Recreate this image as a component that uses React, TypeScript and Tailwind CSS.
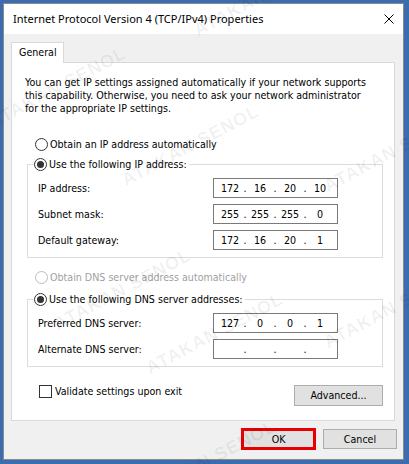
import React, { Fragment } from "react";

const bodyFont = {
  fontFamily: '"DejaVu Sans Condensed", "Liberation Sans", sans-serif',
  fontSize: "10.6px",
  lineHeight: "13px",
};

function Radio({ checked, disabled }: { checked?: boolean; disabled?: boolean }) {
  return (
    <span
      className={`flex h-[13px] w-[13px] shrink-0 items-center justify-center rounded-full border bg-white ${
        disabled ? "border-[#bcbcbc]" : "border-[#333333]"
      }`}
    >
      {checked && <span className="h-[7px] w-[7px] rounded-full bg-[#333333]" />}
    </span>
  );
}

function IpField({ parts }: { parts: string[] }) {
  return (
    <div className="flex h-[20px] w-[125px] items-center border border-[#7a7a7a] bg-white pl-[4px] text-black">
      {parts.map((p, i) => (
        <Fragment key={i}>
          {i > 0 && <span className="w-[6px] text-center">.</span>}
          <span className="w-[24px] text-center">{p}</span>
        </Fragment>
      ))}
    </div>
  );
}

function Row({ label, parts }: { label: string; parts: string[] }) {
  return (
    <div className="flex h-[20px] items-center">
      <span className="w-[185px] pl-[10px]">{label}</span>
      <IpField parts={parts} />
    </div>
  );
}

const marks: { x: number; y: number }[] = [
  { x: -5, y: 132 },
  { x: 128, y: 190 },
  { x: 330, y: 196 },
  { x: 200, y: 40 },
  { x: 60, y: 334 },
  { x: 152, y: 378 },
  { x: 145, y: 505 },
  { x: -150, y: 505 },
  { x: 330, y: 352 },
];

function Watermark() {
  return (
    <div className="pointer-events-none absolute inset-0 overflow-hidden">
      {marks.map((m, i) => (
        <span
          key={i}
          className="absolute whitespace-nowrap font-bold tracking-[1px] text-black/[0.06]"
          style={{
            left: m.x,
            top: m.y - 20,
            fontFamily: '"Liberation Sans", sans-serif',
            fontSize: "18px",
            lineHeight: "20px",
            transform: "rotate(-28deg)",
            transformOrigin: "0 100%",
          }}
        >
          ATAKAN SENOL
        </span>
      ))}
    </div>
  );
}

export default function App() {
  return (
    <div className="relative h-[464px] w-[409px] bg-[#3b6cb0] pb-[4px] pl-[3px] pr-[5px] pt-[3px]">
      <div className="flex h-full flex-col border border-[#8a8a8a] bg-[#f0f0f0] text-black" style={bodyFont}>
        {/* Title bar */}
        <div className="flex h-[30px] items-center justify-between bg-white pl-[9px] pr-[9px]">
          <span style={{ fontFamily: '"Noto Sans", "Open Sans", sans-serif', fontSize: "11px", lineHeight: "14px" }}>
            Internet Protocol Version 4 (TCP/IPv4) Properties
          </span>
          <svg width="10" height="10" viewBox="0 0 10 10">
            <path d="M0.5 0.5 L9.5 9.5 M9.5 0.5 L0.5 9.5" stroke="#000" strokeWidth="1" fill="none" />
          </svg>
        </div>

        {/* Tab header */}
        <div className="ml-[7px] mt-[8px] flex">
          <div className="relative z-10 -mb-[1px] h-[21px] w-[53px] border-l border-r border-t border-[#d9d9d9] bg-white pl-[7px] pt-[3px]">
            General
          </div>
        </div>

        {/* Tab panel */}
        <div className="ml-[7px] mr-[8px] flex h-[359px] flex-col border border-[#d9d9d9] bg-white">
          <p className="ml-[13px] mt-[13px] whitespace-nowrap">
            You can get IP settings assigned automatically if your network supports
            <br />
            this capability. Otherwise, you need to ask your network administrator
            <br />
            for the appropriate IP settings.
          </p>

          <div className="ml-[23px] mt-[22px] flex h-[14px] items-center gap-[2px]">
            <Radio />
            <span>Obtain an IP address automatically</span>
          </div>

          <div className="ml-[15px] mr-[11px] mt-[13px] border border-[#dcdcdc] pb-[7px]">
            <div className="-mt-[8px] ml-[6px] flex h-[15px] w-fit items-center gap-[2px] bg-white pr-[2px]">
              <Radio checked />
              <span>Use the following IP address:</span>
            </div>
            <div className="mt-[6px] flex flex-col gap-[6px]">
              <Row label="IP address:" parts={["172", "16", "20", "10"]} />
              <Row label="Subnet mask:" parts={["255", "255", "255", "0"]} />
              <Row label="Default gateway:" parts={["172", "16", "20", "1"]} />
            </div>
          </div>

          <div className="ml-[23px] mt-[12px] flex h-[14px] items-center gap-[2px] text-[#a0a0a0]">
            <Radio disabled />
            <span>Obtain DNS server address automatically</span>
          </div>

          <div className="ml-[15px] mr-[11px] mt-[15px] border border-[#dcdcdc] pb-[7px]">
            <div className="-mt-[8px] ml-[6px] flex h-[15px] w-fit items-center gap-[2px] bg-white pr-[2px]">
              <Radio checked />
              <span>Use the following DNS server addresses:</span>
            </div>
            <div className="mt-[6px] flex flex-col gap-[6px]">
              <Row label="Preferred DNS server:" parts={["127", "0", "0", "1"]} />
              <Row label="Alternate DNS server:" parts={["", "", "", ""]} />
            </div>
          </div>

          <div className="ml-[27px] mr-[11px] mt-[18px] flex items-start justify-between">
            <div className="flex h-[13px] items-center gap-[3px]">
              <span className="h-[13px] w-[13px] border border-[#333333] bg-white" />
              <span>Validate settings upon exit</span>
            </div>
            <div className="flex h-[21px] w-[89px] items-center justify-center border border-[#adadad] bg-[#e1e1e1]">
              Advanced...
            </div>
          </div>
        </div>

        {/* Footer */}
        <div className="mt-[7px] flex items-start justify-end gap-[7px] pr-[6px]">
          <div className="flex h-[22px] w-[75px] items-center justify-center border-[3px] border-[#e80000] bg-[#e1e1e1]">
            OK
          </div>
          <div className="mt-[1px] flex h-[20px] w-[74px] items-center justify-center border border-[#adadad] bg-[#e1e1e1]">
            Cancel
          </div>
        </div>
      </div>
      <Watermark />
    </div>
  );
}
